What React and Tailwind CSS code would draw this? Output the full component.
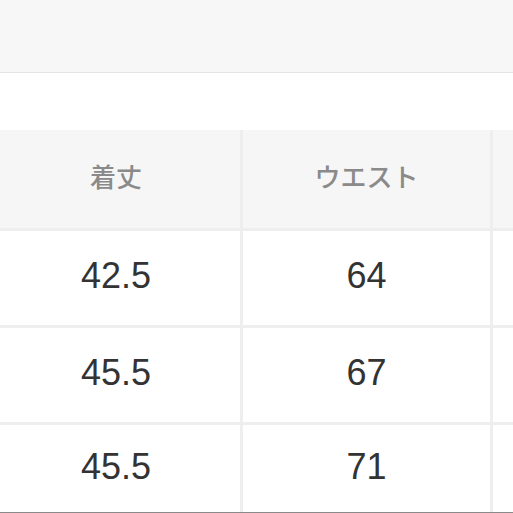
const header = ["着丈", "ウエスト", ""];
const rows = [
  ["42.5", "64", ""],
  ["45.5", "67", ""],
  ["45.5", "71", ""],
];

const App = () => {
  return (
    <div
      className="w-[513px] h-[513px] overflow-hidden bg-white flex flex-col"
      style={{ fontFamily: '"Liberation Sans", Arial, "Noto Sans CJK JP", sans-serif' }}
    >
      <div className="h-[73px] shrink-0 bg-[#f7f7f7] border-b border-[#e4e4e4]"></div>
      <div className="h-[57px] shrink-0 bg-white"></div>
      <div className="flex-1 ml-[-8px] grid grid-cols-[248px_247px_1fr] grid-rows-[98px_94px_94px_1fr] gap-[3px] bg-[#eeeeee] border-b border-[#8a8a8a]">
        {header.map((h, i) => (
          <div
            key={i}
            className="bg-[#f6f6f6] flex items-center justify-center pb-[8px] text-[26px] font-medium text-[#8a8a8a]"
            style={{ fontFamily: '"Noto Sans CJK JP", sans-serif' }}
          >
            {h}
          </div>
        ))}
        {rows.map((r, ri) =>
          r.map((c, ci) => (
            <div
              key={ri + "-" + ci}
              className="bg-white flex items-center justify-center pb-[4px] text-[36px] text-[#333333]"
            >
              {c}
            </div>
          ))
        )}
      </div>
    </div>
  );
};

export default App;
